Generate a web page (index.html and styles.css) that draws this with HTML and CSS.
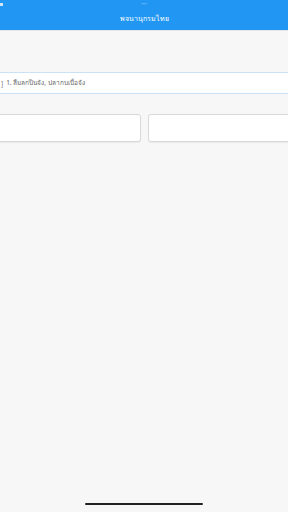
FILE: index.html
```html
<!DOCTYPE html>
<html lang="th">
<head>
<meta charset="utf-8">
<link rel="stylesheet" href="styles.css">
</head>
<body>
<div class="app">
  <header class="header">
    <div class="status"><span class="sq"></span><span class="dots">•••</span></div>
    <div class="title">พจนานุกรมไทย</div>
  </header>
  <div class="row">
    <span class="mark">]</span>
    <span class="text">1. ลืมลกปีนจัง, ปลากบเบื่อจัง</span>
  </div>
  <div class="cards">
    <div class="card left"></div>
    <div class="card right"></div>
  </div>
  <div class="spacer"></div>
  <div class="home"><span class="bar"></span></div>
</div>
</body>
</html>
```
FILE: styles.css
```css
html, body { margin: 0; padding: 0; }
body {
  width: 288px; height: 512px; overflow: hidden;
  background: #f7f7f7;
  font-family: "Noto Sans", "Noto Sans CJK SC", sans-serif;
}
.app { display: flex; flex-direction: column; height: 512px; }
.header {
  background: #2196f3; height: 30px;
  display: flex; flex-direction: column; align-items: center;
  border-bottom: 1px solid #e6e6e6;
  position: relative;
}
.status { height: 9px; width: 100%; display: flex; justify-content: center; }
.sq { position: absolute; left: 0; top: 3px; width: 3px; height: 3px; background: #cfe6fb; }
.dots { color: #7fc0f8; font-size: 5px; line-height: 9px; }
.title { color: #fff; font-size: 7px; line-height: 12px; margin-top: 4px; font-weight: 500; }
.row {
  margin-top: 41px; height: 20px;
  background: #fff;
  border-top: 1px solid #c9e2f7; border-bottom: 1px solid #c9e2f7;
  display: flex; align-items: center; gap: 3px;
  font-size: 6.5px; color: #666; padding-left: 1px;
}
.mark { color: #777; }
.cards { display: flex; gap: 7px; margin-top: 20px; margin-left: -8px; margin-right: -8px; }
.card {
  flex: 1; height: 26px; background: #fff;
  border: 1px solid #d9d9d9; border-radius: 3px;
  box-shadow: 0 1px 1px rgba(0,0,0,0.06);
}
.spacer { flex: 1; }
.home { height: 14px; display: flex; justify-content: center; }
.bar { width: 118px; height: 2px; background: #222; border-radius: 1px; margin-top: 5px; }
```
